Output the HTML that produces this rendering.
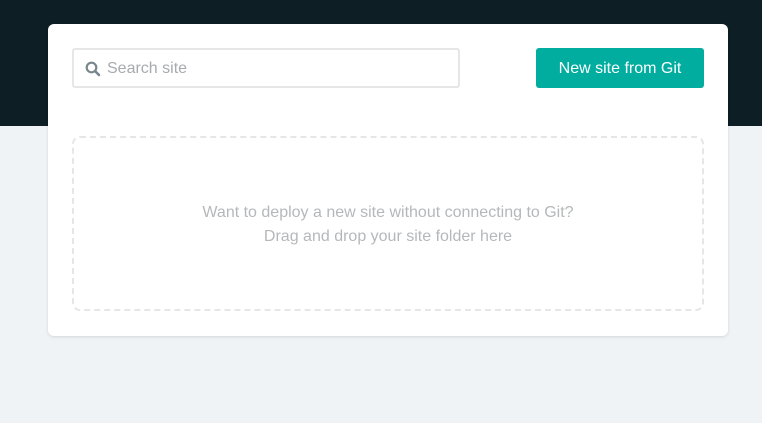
<!DOCTYPE html>
<html><head><style>
html,body{margin:0;padding:0;width:762px;height:423px;overflow:hidden;background:#eff3f6;font-family:"Liberation Sans",sans-serif}
.top{position:absolute;left:0;top:0;width:762px;height:126px;background:#0e1e25}
.card{position:absolute;left:48px;top:24px;width:680px;height:312px;background:#fff;border-radius:6px;box-shadow:0 1px 3px rgba(0,0,0,.12)}
.search{position:absolute;left:24px;top:24px;width:384px;height:36px;border:2px solid #e6e6e6;border-radius:3px;box-sizing:content-box}
.search span{position:absolute;left:33px;top:10px;font-size:16px;color:#a7abae}
.search svg{position:absolute;left:11px;top:11px}
.btn{position:absolute;left:488px;top:24px;width:168px;height:40px;background:#00ad9f;border-radius:3px;color:#fff;font-size:16px;text-align:center;line-height:41px}
.drop{position:absolute;left:24px;top:112px;width:628px;height:171px;border:2px dashed #e6e6e6;border-radius:8px;text-align:center;color:#b5b8ba;font-size:16px;line-height:24px}
.drop div{padding-top:63px}
</style></head><body>
<div class="top"></div>
<div class="card">
 <div class="search"><svg width="16" height="16" viewBox="0 0 16 16"><circle cx="6.5" cy="6.5" r="4.8" fill="none" stroke="#7a868c" stroke-width="2.2"/><line x1="10" y1="10" x2="14" y2="14" stroke="#7a868c" stroke-width="2.6" stroke-linecap="round"/></svg><span>Search site</span></div>
 <div class="btn">New site from Git</div>
 <div class="drop"><div>Want to deploy a new site without connecting to Git?<br>Drag and drop your site folder here</div></div>
</div>
</body></html>
